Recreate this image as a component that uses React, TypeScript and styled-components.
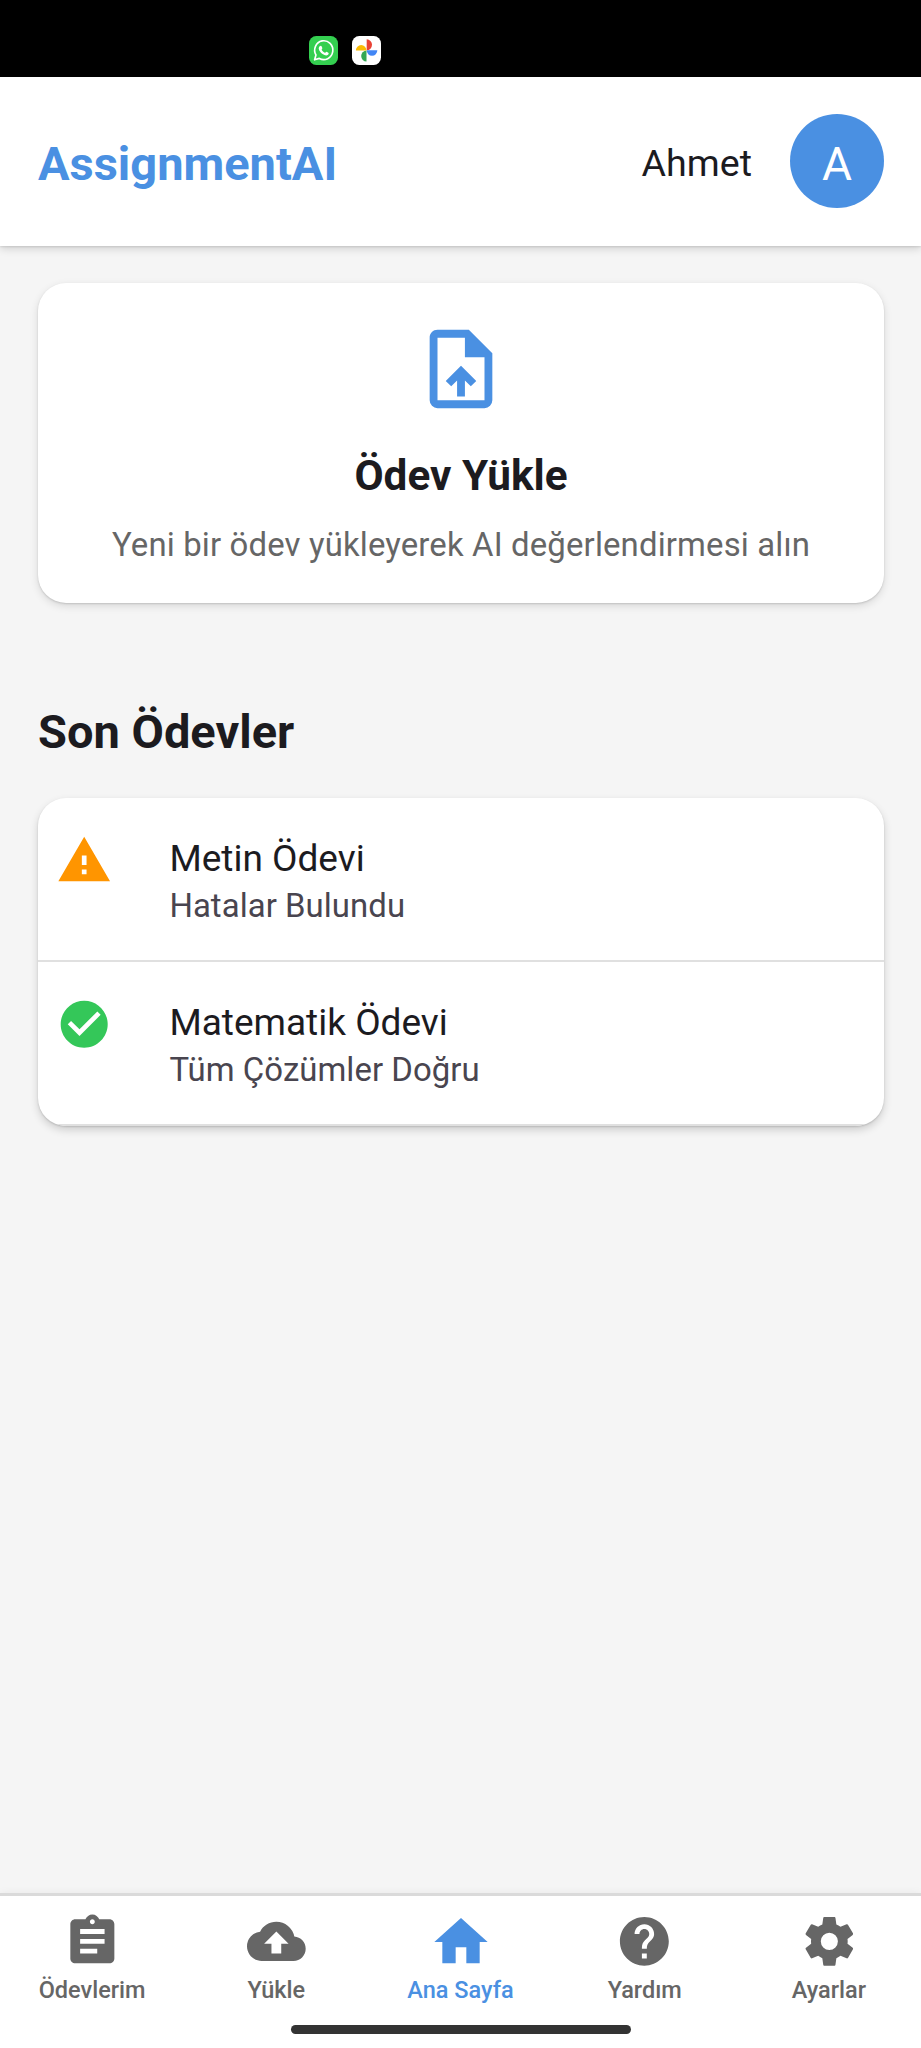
import React from 'react';
import styled, { createGlobalStyle } from 'styled-components';
import { MdAssignment, MdCloudUpload, MdHelp } from 'react-icons/md';

const colors = {
  primary: '#4a90e2',
  text: '#1c1b1f',
  secondary: '#49454f',
  muted: '#666666',
  background: '#f5f5f5',
};

const GlobalStyle = createGlobalStyle`
  * { box-sizing: border-box; }
  body { margin: 0; background: ${colors.background}; font-family: Roboto, sans-serif; }
`;

const Screen = styled.div`
  display: flex;
  flex-direction: column;
  height: 2048px;
  overflow: hidden;
  background: ${colors.background};
`;

const StatusBar = styled.div`
  display: flex;
  align-items: flex-start;
  gap: 14px;
  height: 77px;
  padding: 36px 0 0 308.5px;
  background: #000;
  svg { display: block; width: 29px; height: 29px; }
`;

const Header = styled.header`
  display: flex;
  align-items: center;
  justify-content: space-between;
  height: 168.6px;
  padding: 0 37px 0 38px;
  background: #fff;
  box-shadow: 0 3px 8px rgba(0, 0, 0, 0.14), 0 1px 2px rgba(0, 0, 0, 0.1);
`;

const Brand = styled.h1`
  margin: 0;
  padding-top: 5px;
  font-size: 47px;
  line-height: 56px;
  font-weight: 700;
  color: ${colors.primary};
`;

const User = styled.div`
  display: flex;
  align-items: center;
  gap: 38px;
`;

const UserName = styled.span`
  padding-top: 4px;
  font-size: 37.6px;
  line-height: 56px;
  color: ${colors.text};
`;

const Avatar = styled.div`
  display: flex;
  align-items: center;
  justify-content: center;
  width: 94px;
  height: 94px;
  padding-top: 5px;
  border-radius: 50%;
  background: ${colors.primary};
  color: #fff;
  font-size: 46px;
  line-height: 56px;
`;

const Main = styled.main`
  flex: 1;
  padding: 37.7px 37px 0 38px;
`;

const Card = styled.section`
  border-radius: 28px;
  background: #fff;
  box-shadow: 0 3px 8px rgba(0, 0, 0, 0.12), 0 1px 2px rgba(0, 0, 0, 0.14);
`;

const UploadCard = styled(Card)`
  display: flex;
  flex-direction: column;
  align-items: center;
  height: 320px;
  padding-top: 38.7px;
`;

const UploadTitle = styled.h2`
  margin: 32px 0 0;
  font-size: 42.3px;
  line-height: 56px;
  font-weight: 700;
  color: ${colors.text};
`;

const UploadText = styled.p`
  margin: 17px 0 0;
  font-size: 32.9px;
  line-height: 47px;
  letter-spacing: 0.15px;
  color: ${colors.muted};
`;

const SectionTitle = styled.h2`
  margin: 99px 0 37px;
  font-size: 47px;
  line-height: 59px;
  font-weight: 700;
  color: ${colors.text};
`;

const ListCard = styled(Card)`
  overflow: hidden;
  box-shadow: 0 4px 9px rgba(0, 0, 0, 0.16), 0 1px 2px rgba(0, 0, 0, 0.14);
`;

const ListItem = styled.div`
  display: flex;
  gap: 57px;
  height: 163.7px;
  padding: 34px 0 0 18px;
  border-bottom: 2px solid #e0e0e0;
`;

const ItemTitle = styled.div`
  padding-top: 1px;
  font-size: 37px;
  line-height: 52px;
  color: ${colors.text};
`;

const ItemStatus = styled.div`
  margin-top: -1px;
  font-size: 32.9px;
  line-height: 44px;
  letter-spacing: 0.06px;
  color: ${colors.secondary};
`;

const Glyph = styled.svg<{ $size: number }>`
  display: block;
  flex: none;
  width: ${(p) => p.$size}px;
  height: ${(p) => p.$size}px;
`;

const Footer = styled.footer`
  display: flex;
  flex-direction: column;
  align-items: center;
  height: 155px;
  border-top: 3px solid #dadada;
  background: #fff;
  box-shadow: 0 0 8px rgba(0, 0, 0, 0.06);
`;

const Tabs = styled.nav`
  display: flex;
  width: 100%;
  height: 129px;
`;

const Tab = styled.div<{ $active?: boolean }>`
  flex: 1;
  display: flex;
  flex-direction: column;
  align-items: center;
  padding-top: 13.6px;
  color: ${(p) => (p.$active ? colors.primary : colors.muted)};
`;

const TabIcon = styled.span<{ $active?: boolean }>`
  display: flex;
  align-items: center;
  justify-content: center;
  height: 64px;
  svg {
    display: block;
    width: ${(p) => (p.$active ? 64 : 58.7)}px;
    height: ${(p) => (p.$active ? 64 : 58.7)}px;
  }
`;

const TabLabel = styled.span`
  margin-top: 2px;
  font-size: 23.5px;
  line-height: 28px;
  font-weight: 500;
  white-space: nowrap;
`;

const HomeIndicator = styled.div`
  width: 340px;
  height: 9px;
  border-radius: 5px;
  background: #333;
`;

const WhatsAppIcon = () => (
  <svg viewBox="0 0 30 29" preserveAspectRatio="none">
    <rect width="30" height="29" rx="7.5" fill="#34cf50" />
    <path d="M5.800 23.800l1.400-4.800a9.400 9.400 0 1 1 3.500 3.400z" fill="none" stroke="#fff" strokeWidth="1.7" strokeLinejoin="round" />
    <path d="M11.200 10.200c.6-.7 1.500-.7 1.800 0l.8 1.700c.2.6-.9 1.400-.7 1.800.7 1.400 1.900 2.400 3.300 3.100.6.2 1.200-1.200 1.800-1l1.800.9c.7.4.3 1.600-.3 2.100-1.500 1.200-3.500.7-5.700-.7-2-1.300-3.700-3.500-3.900-5.300-.1-1.100.3-1.900.9-2.600z" fill="#fff" />
  </svg>
);

const PhotosIcon = () => (
  <svg viewBox="0 0 30 29" preserveAspectRatio="none">
    <rect width="30" height="29" rx="7.5" fill="#fff" />
    <path d="M15.200 14.300V3.300a5.500 5.500 0 0 1 0 11z" fill="#e94235" />
    <path d="M15.200 14.300h11a5.500 5.500 0 0 1-11 0z" fill="#4286f5" />
    <path d="M15 14.600v11a5.500 5.500 0 0 1 0-11z" fill="#34a853" />
    <path d="M15 14.600h-11a5.500 5.500 0 0 1 11 0z" fill="#fabb05" />
  </svg>
);

const UploadFileIcon = () => (
  <Glyph $size={94} viewBox="0 0 24 24" fill={colors.primary}>
    <path d="M14 2H6C4.890 2 4 2.900 4 4V20A2 2 0 0 0 6 22H18A2 2 0 0 0 20 20V8L14 2M18 20H6V4H13V9H18V20M12 11.200L8.100 15.050L9.500 16.400L11 14.950V19H13V14.950L14.500 16.400L15.900 15.050Z" />
  </Glyph>
);

const AlertIcon = () => (
  <Glyph $size={56.4} viewBox="0 0 24 24" fill="#ff9500">
    <path d="M13 14H11V10H13M13 18H11V16H13M1 21H23L12 2L1 21Z" />
  </Glyph>
);

const CheckIcon = () => (
  <Glyph $size={56.4} viewBox="0 0 24 24" fill="#34c759">
    <path d="M12 2C6.500 2 2 6.500 2 12S6.500 22 12 22 22 17.500 22 12 17.500 2 12 2M10 17L5 12L6.410 10.590L10 14.170L17.590 6.580L19 8L10 17Z" />
  </Glyph>
);

const HomeIcon = () => (
  <svg viewBox="0 0 24 24" fill="currentColor">
    <path d="M10 20V14H14V20H19V12H22L12 3L2 12H5V20H10Z" />
  </svg>
);

const CogIcon = () => (
  <svg viewBox="0 0 24 24" fill="currentColor">
    <path d="M12,15.5A3.5,3.5 0 0,1 8.5,12A3.5,3.5 0 0,1 12,8.5A3.5,3.5 0 0,1 15.5,12A3.5,3.5 0 0,1 12,15.5M19.43,12.97C19.47,12.65 19.5,12.33 19.5,12C19.5,11.67 19.47,11.34 19.43,11L21.54,9.37C21.73,9.22 21.78,8.95 21.66,8.73L19.66,5.27C19.54,5.05 19.27,4.96 19.05,5.05L16.56,6.05C16.04,5.66 15.5,5.32 14.87,5.07L14.5,2.42C14.46,2.18 14.25,2 14,2H10C9.75,2 9.54,2.18 9.5,2.42L9.13,5.07C8.5,5.32 7.96,5.66 7.44,6.05L4.95,5.05C4.73,4.96 4.46,5.05 4.34,5.27L2.34,8.73C2.21,8.95 2.27,9.22 2.46,9.37L4.57,11C4.53,11.34 4.5,11.67 4.5,12C4.5,12.33 4.53,12.65 4.57,12.97L2.46,14.63C2.27,14.78 2.21,15.05 2.34,15.27L4.34,18.73C4.46,18.95 4.73,19.03 4.95,18.95L7.44,17.94C7.96,18.34 8.5,18.68 9.13,18.93L9.5,21.58C9.54,21.82 9.75,22 10,22H14C14.25,22 14.46,21.82 14.5,21.58L14.87,18.93C15.5,18.67 16.04,18.34 16.56,17.94L19.05,18.95C19.27,19.03 19.54,18.95 19.66,18.73L21.66,15.27C21.78,15.05 21.73,14.78 21.54,14.63L19.43,12.97Z" />
  </svg>
);

const assignments = [
  { title: 'Metin Ödevi', status: 'Hatalar Bulundu', icon: <AlertIcon /> },
  { title: 'Matematik Ödevi', status: 'Tüm Çözümler Doğru', icon: <CheckIcon /> },
];

const tabs = [
  { label: 'Ödevlerim', icon: <MdAssignment /> },
  { label: 'Yükle', icon: <MdCloudUpload /> },
  { label: 'Ana Sayfa', icon: <HomeIcon />, active: true },
  { label: 'Yardım', icon: <MdHelp /> },
  { label: 'Ayarlar', icon: <CogIcon /> },
];

export default function App() {
  return (
    <Screen>
      <GlobalStyle />
      <StatusBar>
        <WhatsAppIcon />
        <PhotosIcon />
      </StatusBar>
      <Header>
        <Brand>AssignmentAI</Brand>
        <User>
          <UserName>Ahmet</UserName>
          <Avatar>A</Avatar>
        </User>
      </Header>
      <Main>
        <UploadCard>
          <UploadFileIcon />
          <UploadTitle>Ödev Yükle</UploadTitle>
          <UploadText>Yeni bir ödev yükleyerek AI değerlendirmesi alın</UploadText>
        </UploadCard>
        <SectionTitle>Son Ödevler</SectionTitle>
        <ListCard>
          {assignments.map((item) => (
            <ListItem key={item.title}>
              {item.icon}
              <div>
                <ItemTitle>{item.title}</ItemTitle>
                <ItemStatus>{item.status}</ItemStatus>
              </div>
            </ListItem>
          ))}
        </ListCard>
      </Main>
      <Footer>
        <Tabs>
          {tabs.map((tab) => (
            <Tab key={tab.label} $active={tab.active}>
              <TabIcon $active={tab.active}>{tab.icon}</TabIcon>
              <TabLabel>{tab.label}</TabLabel>
            </Tab>
          ))}
        </Tabs>
        <HomeIndicator />
      </Footer>
    </Screen>
  );
}
